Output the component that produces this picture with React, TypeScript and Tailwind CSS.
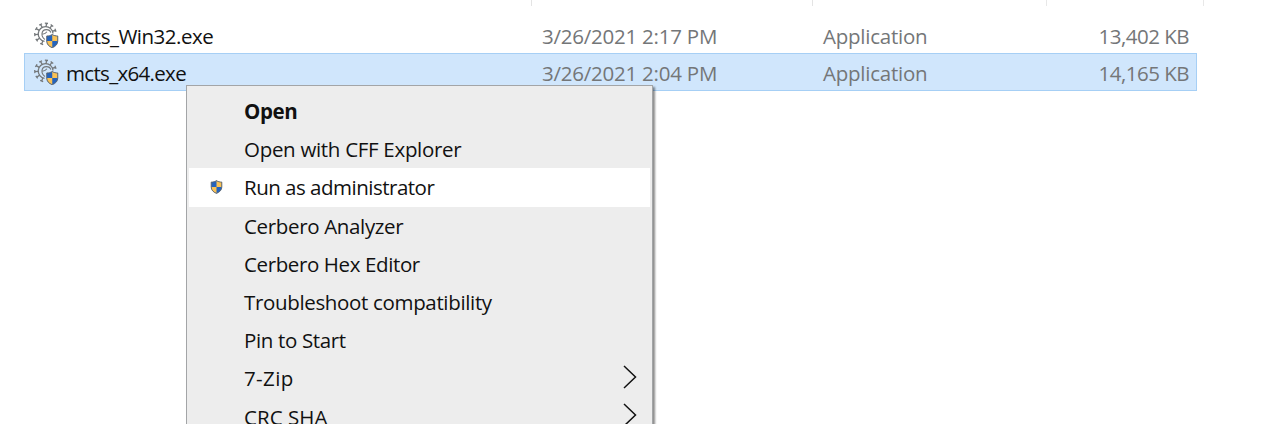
const files = [
  { name: "mcts_Win32.exe", date: "3/26/2021 2:17 PM", type: "Application", size: "13,402 KB", selected: false, track: "tracking-[-0.49px]" },
  { name: "mcts_x64.exe", date: "3/26/2021 2:04 PM", type: "Application", size: "14,165 KB", selected: true, track: "tracking-[-0.68px]" },
];

const menu = [
  { label: "Open", cls: "font-bold tracking-[-0.42px]" },
  { label: "Open with CFF Explorer", cls: "tracking-[-0.3px]" },
  { label: "Run as administrator", cls: "tracking-[-0.5px]", shield: true },
  { label: "Cerbero Analyzer", cls: "tracking-[-0.34px]" },
  { label: "Cerbero Hex Editor", cls: "tracking-[-0.38px]" },
  { label: "Troubleshoot compatibility", cls: "tracking-[-0.34px]" },
  { label: "Pin to Start", cls: "tracking-[-0.35px]" },
  { label: "7-Zip", cls: "tracking-[0.4px]", sub: true },
  { label: "CRC SHA", cls: "tracking-[0.05px]", sub: true },
];

const outline = "M6 .6C4.6 1.6 2.8 2.1.7 2.1V7c0 3 2 5.1 5.3 6.4C9.3 12.1 11.3 10 11.3 7V2.1C9.2 2.1 7.4 1.6 6 .6Z";

function ShieldShape() {
  return (
    <>
      <path d={outline} fill="#2463bd" stroke="none" />
      <path d="M6 .6C7.4 1.6 9.2 2.1 11.3 2.1V7H6Z" fill="#fac255" stroke="none" />
      <path d="M6 7v6.4C2.7 12.1.7 10 .7 7Z" fill="#fac255" stroke="none" />
      <path d={outline} fill="none" stroke="#59636d" strokeWidth="0.9" />
    </>
  );
}

const spikes = [-130, -98, -65, -32, 0, 32, 64, 196];

function VirusIcon() {
  return (
    <svg className="block h-[26px] w-[25px] shrink-0" viewBox="0 0 25 26" fill="none" stroke="#74787b" strokeWidth="1.3">
      <path d="M10.500 19.300A7.400 7.400 0 1 1 19 11.500" />
      <path d="M11 17.500C6.500 14.500 7 7.600 12.500 7.600c2.400 0 3.800 1.100 4.300 3M8.600 12c2 .3 3.300-.8 4.300-2.200" strokeWidth="1.1" />
      {spikes.map((a) => (
        <path key={a} d="M11.500 4.700V1.300M9.900 1.300h3.200" transform={`rotate(${a + 5} 11.500 12)`} />
      ))}
      <g transform="translate(12 11.800) scale(1.04)">
        <ShieldShape />
      </g>
    </svg>
  );
}

export default function App() {
  return (
    <div className="relative h-[424px] w-[1284px] overflow-hidden bg-white font-['Open_Sans','Noto_Sans',sans-serif] text-[20.5px] leading-[36px] text-[#111]">
      <div className="flex h-[17px] items-start pl-[531px]">
        <div className="h-[6px] w-[281px] border-l border-[#e4e4e4]" />
        <div className="h-[6px] w-[234px] border-l border-[#e4e4e4]" />
        <div className="h-[6px] w-[158px] border-x border-[#e8e8e8]" />
      </div>
      <div className="ml-[24px] w-[1173px]">
        {files.map((f) => (
          <div
            key={f.name}
            className={`flex items-center whitespace-nowrap border pl-[9px] pr-[7px] ${f.selected ? "h-[38px] border-[#a6cff5] bg-[#d0e6fc]" : "h-[36px] border-transparent"}`}
          >
            <VirusIcon />
            <div className="flex grow pt-[2px]">
              <span className={`ml-[7px] w-[476px] ${f.track}`}>{f.name}</span>
              <span className="w-[281px] tracking-[-0.23px] text-[#747678]">{f.date}</span>
              <span className="tracking-[-0.24px] text-[#747678]">{f.type}</span>
              <span className="ml-auto tracking-[-0.5px] text-[#747678]">{f.size}</span>
            </div>
          </div>
        ))}
      </div>
      <div className="absolute left-[186px] top-[85px] w-[467px] border border-[#a3a5a7] bg-[#ededed] px-[2px] pt-[6px] shadow-[2px_2px_2px_rgba(0,0,0,0.45)]">
        {menu.map((m) => (
          <div key={m.label} className={`flex h-[38.2px] items-center whitespace-nowrap pr-[13px] ${m.shield ? "bg-white" : ""}`}>
            <span className="flex w-[55px] justify-center pb-[1px]">
              {m.shield && (
                <svg className="block h-[14px] w-[13px]" viewBox="0 0 12 14">
                  <ShieldShape />
                </svg>
              )}
            </span>
            <span className={m.cls}>{m.label}</span>
            {m.sub && (
              <svg className="mb-[3px] ml-auto block h-[24px] w-[14px]" viewBox="0 0 14 24" fill="none" stroke="#111" strokeWidth="1.5">
                <path d="M1 1L12.5 12L1 23" />
              </svg>
            )}
          </div>
        ))}
      </div>
    </div>
  );
}
